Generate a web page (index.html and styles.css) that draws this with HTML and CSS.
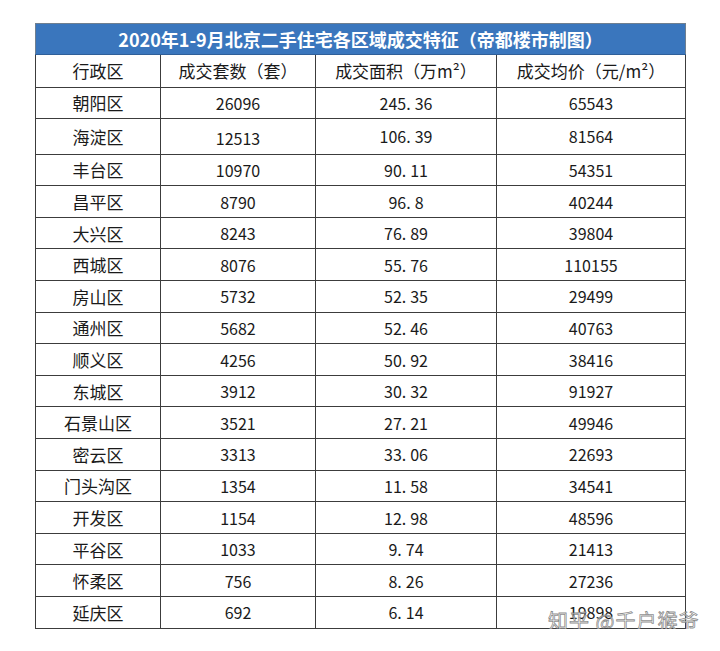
FILE: index.html
```html
<!DOCTYPE html>
<html lang="zh">
<head>
<meta charset="utf-8">
<link rel="stylesheet" href="styles.css">
</head>
<body>
<div class="wrap">
<table class="data">
<colgroup><col class="c1"><col class="c2"><col class="c3"><col class="c4"></colgroup>
<thead>
<tr class="title"><th colspan="4">2020年1-9月北京二手住宅各区域成交特征（帝都楼市制图）</th></tr>
<tr class="head"><th>行政区</th><th>成交套数（套）</th><th>成交面积（万m²）</th><th>成交均价（元/m²）</th></tr>
</thead>
<tbody>
<tr><td>朝阳区</td><td class="n">26096</td><td class="n">245<span class="dot">.</span>36</td><td class="n">65543</td></tr>
<tr><td>海淀区</td><td class="n low">12513</td><td class="n">106<span class="dot">.</span>39</td><td class="n">81564</td></tr>
<tr><td>丰台区</td><td class="n">10970</td><td class="n">90<span class="dot">.</span>11</td><td class="n">54351</td></tr>
<tr><td>昌平区</td><td class="n">8790</td><td class="n">96<span class="dot">.</span>8</td><td class="n">40244</td></tr>
<tr><td>大兴区</td><td class="n">8243</td><td class="n">76<span class="dot">.</span>89</td><td class="n">39804</td></tr>
<tr><td>西城区</td><td class="n">8076</td><td class="n">55<span class="dot">.</span>76</td><td class="n">110155</td></tr>
<tr><td>房山区</td><td class="n">5732</td><td class="n">52<span class="dot">.</span>35</td><td class="n">29499</td></tr>
<tr><td>通州区</td><td class="n">5682</td><td class="n">52<span class="dot">.</span>46</td><td class="n">40763</td></tr>
<tr><td>顺义区</td><td class="n">4256</td><td class="n">50<span class="dot">.</span>92</td><td class="n">38416</td></tr>
<tr><td>东城区</td><td class="n">3912</td><td class="n">30<span class="dot">.</span>32</td><td class="n">91927</td></tr>
<tr><td>石景山区</td><td class="n">3521</td><td class="n">27<span class="dot">.</span>21</td><td class="n">49946</td></tr>
<tr><td>密云区</td><td class="n">3313</td><td class="n">33<span class="dot">.</span>06</td><td class="n">22693</td></tr>
<tr><td>门头沟区</td><td class="n">1354</td><td class="n">11<span class="dot">.</span>58</td><td class="n">34541</td></tr>
<tr><td>开发区</td><td class="n">1154</td><td class="n">12<span class="dot">.</span>98</td><td class="n">48596</td></tr>
<tr><td>平谷区</td><td class="n">1033</td><td class="n">9<span class="dot">.</span>74</td><td class="n">21413</td></tr>
<tr><td>怀柔区</td><td class="n">756</td><td class="n">8<span class="dot">.</span>26</td><td class="n">27236</td></tr>
<tr><td>延庆区</td><td class="n">692</td><td class="n">6<span class="dot">.</span>14</td><td class="n">19898</td></tr>
</tbody>
</table>
<div class="watermark">知乎 @千户猴爷</div>
</div>
</body>
</html>
```
FILE: styles.css
```css
html, body {
  margin: 0;
  padding: 0;
  background: #ffffff;
}
body {
  padding: 23px 0 0 35px;
  font-family: "Noto Sans CJK SC", "Noto Sans", sans-serif;
  color: #1a1a1a;
}
.wrap {
  position: relative;
  width: 650px;
}
.data {
  border-collapse: collapse;
  table-layout: fixed;
  width: 650px;
}
.c1 { width: 125px; }
.c2 { width: 155px; }
.c3 { width: 181px; }
.c4 { width: 189px; }
.data th, .data td {
  border: 1px solid #3c3c3c;
  padding: 0;
  text-align: center;
  vertical-align: middle;
  white-space: nowrap;
  line-height: 1;
}
.title th {
  background: #3a76bd;
  color: #ffffff;
  font-weight: bold;
  font-size: 18px;
  height: 29.5px;
  border-color: #6f7f90;
  border-bottom-color: #2f5f99;
}
.head th {
  font-weight: normal;
  font-size: 17px;
  height: 32px;
}
.data td {
  font-size: 17px;
  height: 30.6px;
}
.data td.n {
  font-size: 16px;
}
.data td.low {
  padding-top: 4px;
}
.dot {
  margin-right: 4px;
}
.watermark {
  position: absolute;
  left: 513px;
  top: 583px;
  font-size: 20px;
  letter-spacing: 1px;
  color: rgba(255, 255, 255, 0.7);
  -webkit-text-stroke: 0.8px rgba(110, 110, 110, 0.8);
  white-space: nowrap;
}
```
